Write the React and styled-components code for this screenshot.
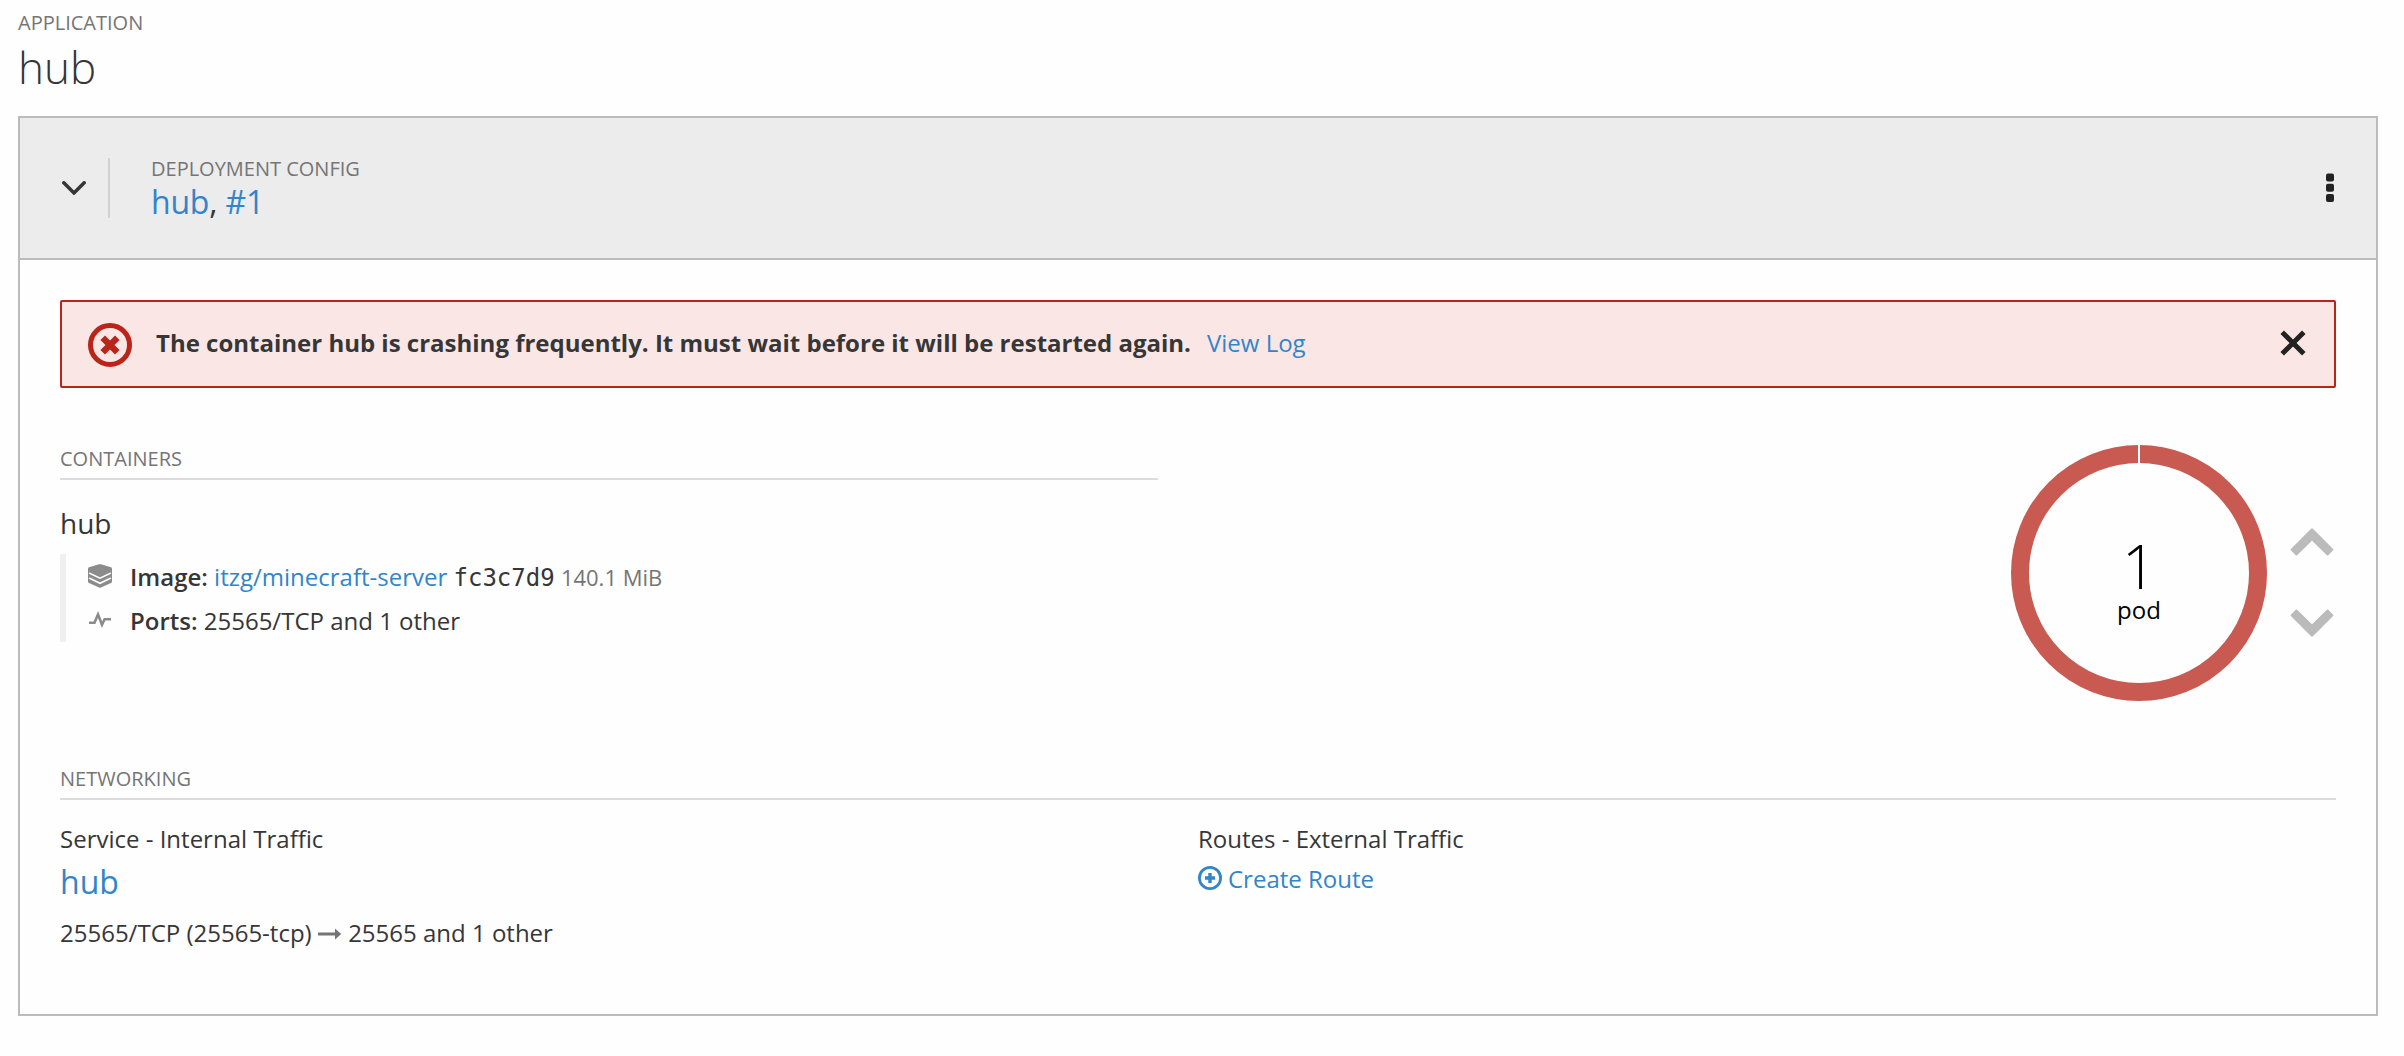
import React from "react";
import styled, { createGlobalStyle } from "styled-components";

const GlobalStyle = createGlobalStyle`
  * { box-sizing: border-box; }
  body {
    margin: 0;
    background: #fefefe;
    color: #363636;
    font-family: "Open Sans", "Noto Sans", sans-serif;
    font-size: 24px;
    line-height: 40px;
  }
`;

const Page = styled.main`
  padding: 7px 26px 0 18px;
`;

const Label = styled.div`
  color: #757575;
  font-size: 20px;
  line-height: 32px;
  text-transform: uppercase;
`;

const Title = styled.h1`
  margin: 2px 0 23px;
  font-size: 44px;
  font-weight: 300;
  line-height: 52px;
`;

const Link = styled.a`
  color: #3285c9;
  text-decoration: none;
`;

const Card = styled.section`
  height: 900px;
  border: 2px solid #bbb;
  box-shadow: 0 2px 0 #dcdcdc;
`;

const CardHeader = styled.header`
  display: flex;
  align-items: center;
  height: 142px;
  padding: 0 42px 0 40px;
  background: #ececec;
  border-bottom: 2px solid #bbb;
`;

const Toggle = styled.div`
  display: flex;
  align-items: center;
  width: 50px;
  height: 60px;
  padding-left: 2px;
  border-right: 2px solid #d1d1d1;
`;

const HeaderText = styled.div`
  flex: 1;
  padding-left: 41px;
`;

const HeaderName = styled.div`
  font-size: 32px;
  letter-spacing: -0.2px;
  line-height: 38px;
`;

const HeaderLabel = styled(Label)`
  line-height: 28px;
`;

const CardBody = styled.div`
  padding: 40px;
`;

const Alert = styled.div`
  display: flex;
  align-items: center;
  height: 88px;
  padding: 0 28px 0 26px;
  background: #fae7e5;
  border: 2px solid #bb2419;
  border-radius: 2px;
`;

const AlertText = styled.div`
  flex: 1;
  padding: 0 0 2px 24px;

  a { margin-left: 16px; }
`;

const Workload = styled.div`
  display: flex;
  justify-content: space-between;
  height: 352px;
  padding-top: 55px;
`;

const Containers = styled.div`
  width: 1098px;
`;

const SectionTitle = styled(Label)`
  height: 37px;
  border-bottom: 2px solid #dcdcdc;
`;

const ContainerName = styled.div`
  margin-top: 23px;
  font-size: 28px;
  line-height: 40px;
`;

const Details = styled.div`
  height: 88px;
  margin-top: 11px;
  padding-left: 22px;
  border-left: 6px solid #f0f0f0;
`;

const DetailRow = styled.div`
  display: flex;
  align-items: center;
  height: 44px;
  gap: 18px;
`;

const DetailText = styled.div`
  height: 42px;
  padding-top: 2px;
  white-space: pre;
`;

const DetailName = styled.span`
  font-weight: 600;
`;

const Hash = styled.span`
  font-family: "DejaVu Sans Mono", monospace;
  font-size: 24px;
  line-height: 1;
`;

const Muted = styled.span`
  color: #757575;
  font-size: 22px;
`;

const Scaling = styled.div`
  display: flex;
  gap: 23px;
  margin-right: 2px;
`;

const Donut = styled.div`
  display: grid;
  width: 256px;
  height: 256px;
  margin-top: 2px;

  > * { grid-area: 1 / 1; }
`;

const PodCount = styled.div`
  display: flex;
  flex-direction: column;
  align-items: center;
  gap: 2px;
  padding-top: 89px;
  color: #000;
`;

const Count = styled.div`
  font-size: 60px;
  font-weight: 300;
  line-height: 64px;
`;

const CountUnit = styled.div`
  font-size: 24px;
  line-height: 20px;
`;

const Arrows = styled.div`
  display: flex;
  flex-direction: column;
  gap: 53px;
  padding-top: 85px;

  svg { display: block; }
`;

const Networking = styled.div`
  padding-top: 23px;
`;

const Columns = styled.div`
  display: grid;
  grid-template-columns: 1138px 1fr;
`;

const Column = styled.div`
  padding-top: 19px;
`;

const ServiceName = styled.div`
  margin-top: 1px;
  font-size: 32px;
  line-height: 44px;
`;

const PortLine = styled.div`
  margin-top: 9px;
  white-space: pre;

  svg { vertical-align: 1px; }
`;

const CreateRoute = styled(Link)`
  display: flex;
  align-items: center;
  gap: 6px;

  svg { margin-top: -2px; }
`;

const ErrorMark = styled.svg`
  margin-top: 2px;
`;

const CloseMark = styled.svg`
  margin-top: -3px;
`;

function ChevronDown() {
  return (
    <svg width="24" height="14" viewBox="0 0 24 14" fill="none" stroke="#363636" strokeWidth="3.5">
      <path d="M1.8 1.8 12 12 22.2 1.8" strokeLinecap="round" />
    </svg>
  );
}

function Kebab() {
  return (
    <svg width="8" height="30" viewBox="0 0 8 30" fill="#222">
      <rect y="0.5" width="8" height="8" rx="2" />
      <rect y="10.7" width="8" height="8" rx="2" />
      <rect y="21" width="8" height="8" rx="2" />
    </svg>
  );
}

function ErrorIcon() {
  return (
    <ErrorMark width="44" height="44" viewBox="0 0 44 44" fill="none" stroke="#bb2419">
      <circle cx="22" cy="22" r="19.5" strokeWidth="5" />
      <path d="M14.7 14.7 29.3 29.3M29.3 14.7 14.7 29.3" strokeWidth="6.4" />
    </ErrorMark>
  );
}

function CloseIcon() {
  return (
    <CloseMark width="26" height="26" viewBox="0 0 26 26" fill="none" stroke="#222" strokeWidth="5">
      <path d="M2.2 2.2 23.8 23.8M23.8 2.2 2.2 23.8" />
    </CloseMark>
  );
}

function LayersIcon() {
  return (
    <svg width="24" height="24" viewBox="0 0 24 24" fill="#8b8b8b">
      <path d="M0 5Q0 3.6 1 3.3L11 .3Q12 0 13 .3L23 3.3Q24 3.6 24 5V17.6Q24 18.6 23 19.1L13 23.5Q12 24 11 23.5L1 19.1Q0 18.6 0 17.6Z" />
      <path d="M1.6 9.2 12 14.2 22.4 9.2M1.6 14.3 12 19.3 22.4 14.3" fill="none" stroke="#fefefe" strokeWidth="1.5" strokeLinecap="round" />
    </svg>
  );
}

function PulseIcon() {
  return (
    <svg width="24" height="18" viewBox="0 0 24 18" fill="none" stroke="#8b8b8b" strokeWidth="2.6">
      <path d="M1 11.7H6.5L10 3.5 14 13.8 16.6 8.3H23" />
    </svg>
  );
}

function ScaleArrow({ down }) {
  return (
    <svg width="44" height="28" viewBox="0 0 44 28" fill="#bbb" stroke="#bbb" strokeWidth="2" strokeLinejoin="round">
      <path
        transform={down ? "rotate(180 22 14)" : undefined}
        d="M22 1.2 42.4 21.6 37.6 26.5 22 11.2 6.4 26.5 1.6 21.6Z"
      />
    </svg>
  );
}

function ArrowRight() {
  return (
    <svg width="24" height="14" viewBox="0 0 24 14" fill="#757575">
      <path d="M0 5.4H17V1.4L23.2 7 17 12.6V8.6H0Z" />
    </svg>
  );
}

function PlusCircle() {
  return (
    <svg width="24" height="24" viewBox="0 0 24 24" fill="none" stroke="#3285c9">
      <circle cx="12" cy="12" r="10.6" strokeWidth="2.8" />
      <path d="M7 12H17M12 7V17" strokeWidth="3.4" />
    </svg>
  );
}

function Ring() {
  return (
    <svg width="256" height="256" viewBox="0 0 256 256">
      <circle cx="128" cy="128" r="119" fill="none" stroke="#c95a52" strokeWidth="18" />
      <path d="M128 0V20" stroke="#fff" strokeWidth="2" />
    </svg>
  );
}

export default function App() {
  return (
    <>
      <GlobalStyle />
      <Page>
        <Label>Application</Label>
        <Title>hub</Title>
        <Card>
          <CardHeader>
            <Toggle><ChevronDown /></Toggle>
            <HeaderText>
              <HeaderLabel>Deployment Config</HeaderLabel>
              <HeaderName><Link>hub</Link>, <Link>#1</Link></HeaderName>
            </HeaderText>
            <Kebab />
          </CardHeader>
          <CardBody>
            <Alert>
              <ErrorIcon />
              <AlertText>
                <strong>The container hub is crashing frequently. It must wait before it will be restarted again.</strong>
                <Link>View Log</Link>
              </AlertText>
              <CloseIcon />
            </Alert>
            <Workload>
              <Containers>
                <SectionTitle>Containers</SectionTitle>
                <ContainerName>hub</ContainerName>
                <Details>
                  <DetailRow>
                    <LayersIcon />
                    <DetailText>
                      <DetailName>Image:</DetailName> <Link>itzg/minecraft-server</Link> <Hash>fc3c7d9</Hash> <Muted>140.1 MiB</Muted>
                    </DetailText>
                  </DetailRow>
                  <DetailRow>
                    <PulseIcon />
                    <DetailText><DetailName>Ports:</DetailName> 25565/TCP and 1 other</DetailText>
                  </DetailRow>
                </Details>
              </Containers>
              <Scaling>
                <Donut>
                  <Ring />
                  <PodCount>
                    <Count>1</Count>
                    <CountUnit>pod</CountUnit>
                  </PodCount>
                </Donut>
                <Arrows>
                  <ScaleArrow />
                  <ScaleArrow down />
                </Arrows>
              </Scaling>
            </Workload>
            <Networking>
              <SectionTitle>Networking</SectionTitle>
              <Columns>
                <Column>
                  <div>Service - Internal Traffic</div>
                  <ServiceName><Link>hub</Link></ServiceName>
                  <PortLine>25565/TCP (25565-tcp) <ArrowRight /> 25565 and 1 other</PortLine>
                </Column>
                <Column>
                  <div>Routes - External Traffic</div>
                  <CreateRoute><PlusCircle /> Create Route</CreateRoute>
                </Column>
              </Columns>
            </Networking>
          </CardBody>
        </Card>
      </Page>
    </>
  );
}
